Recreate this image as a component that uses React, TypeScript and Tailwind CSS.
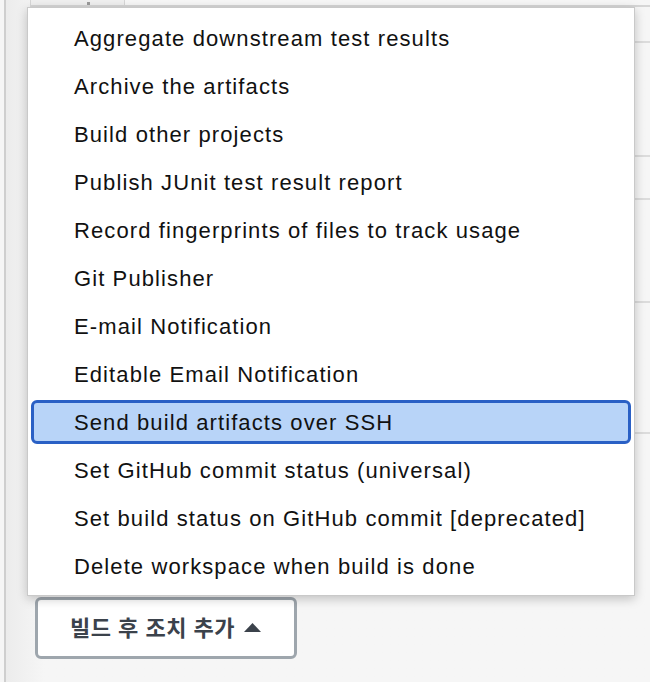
const items = [
  "Aggregate downstream test results",
  "Archive the artifacts",
  "Build other projects",
  "Publish JUnit test result report",
  "Record fingerprints of files to track usage",
  "Git Publisher",
  "E-mail Notification",
  "Editable Email Notification",
  "Send build artifacts over SSH",
  "Set GitHub commit status (universal)",
  "Set build status on GitHub commit [deprecated]",
  "Delete workspace when build is done",
]

const selected = "Send build artifacts over SSH"

export default function App() {
  return (
    <div
      className="relative w-[650px] h-[682px] overflow-hidden bg-[#f6f6f6] text-[#111]"
      style={{ fontFamily: '"Liberation Sans", Arial, "Noto Sans CJK KR", sans-serif' }}
    >
      {/* page behind the popup */}
      <div className="flex h-full">
        <div className="w-[4px]" />
        <div className="flex-1 border-l-2 border-[#cfcfcf] bg-gradient-to-r from-[#ececec] to-[#f6f6f6] to-[6%] flex flex-col">
          <div className="flex h-[7px]">
            <div className="w-[24px]" />
            <div className="w-[95px] border-x border-b-2 border-[#d6d6d6] bg-[#efefef] flex justify-center">
              <div className="mt-[2px] ml-[22px] w-[3px] h-[3px] bg-[#9a9a9a]" />
            </div>
            <div className="flex-1 border-b-2 border-[#d6d6d6]" />
          </div>
          <div className="ml-[24px] flex flex-col">
            <div className="h-[36px] border-b-2 border-[#dcdcdc]" />
            <div className="h-[114px] border-b-2 border-[#dcdcdc]" />
            <div className="h-[43px] border-b-2 border-[#dcdcdc]" />
            <div className="h-[103px] border-b-2 border-[#dcdcdc]" />
            <div className="h-[131px] border-b-2 border-[#dcdcdc]" />
          </div>
          <div className="mt-[163px] ml-[29px]">
            <button className="h-[62px] w-[262px] rounded-[6px] border-[3px] border-[#9ea6ad] bg-white text-[22px] font-bold text-[#3b424b] flex items-center pl-[32px] gap-[8px] tracking-[0.5px]">
              빌드 후 조치 추가
              <svg width="19" height="11" viewBox="0 0 19 11" className="mt-[-2px]">
                <path d="M9.5 1 L18 10 L1 10 Z" fill="#3b424b" />
              </svg>
            </button>
          </div>
        </div>
      </div>

      {/* dropdown menu */}
      <div className="absolute left-[27px] top-[7px] w-[608px] bg-white border border-[#c9c9c9] shadow-[0_3px_10px_rgba(0,0,0,0.22)] pt-[6px] pb-[5px]">
        {items.map((item) =>
          item === selected ? (
            <div
              key={item}
              className="mx-[3px] my-[2px] h-[44px] rounded-[6px] border-[3px] border-[#2a60c5] bg-[#b8d4f8] flex items-center pl-[40px] text-[22px] tracking-[1.1px]"
            >
              {item}
            </div>
          ) : (
            <div key={item} className="h-[48px] flex items-center pl-[46px] text-[22px] tracking-[1.1px]">
              {item}
            </div>
          )
        )}
      </div>
    </div>
  )
}
